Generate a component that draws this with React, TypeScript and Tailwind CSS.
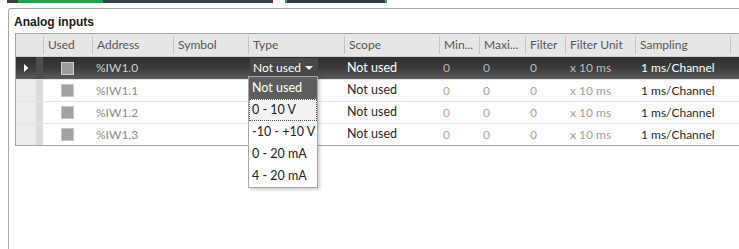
type Col = { key: string; label: string; w: string };

const cols: Col[] = [
  { key: "used", label: "Used", w: "w-[49px]" },
  { key: "address", label: "Address", w: "w-[81px]" },
  { key: "symbol", label: "Symbol", w: "w-[75px]" },
  { key: "type", label: "Type", w: "w-[96px]" },
  { key: "scope", label: "Scope", w: "w-[95px]" },
  { key: "min", label: "Min...", w: "w-[40px]" },
  { key: "max", label: "Maxi...", w: "w-[46px]" },
  { key: "filter", label: "Filter", w: "w-[40px]" },
  { key: "unit", label: "Filter Unit", w: "w-[70px]" },
  { key: "sampling", label: "Sampling", w: "w-[95px]" },
  { key: "extra", label: "", w: "w-[40px]" },
];

const rows = ["%IW1.0", "%IW1.1", "%IW1.2", "%IW1.3"];
const options = ["Not used", "0 - 10 V", "-10 - +10 V", "0 - 20 mA", "4 - 20 mA"];

function Checkbox({ selected }: { selected?: boolean }) {
  return (
    <div
      className={
        "w-[13px] h-[13px] border " +
        (selected ? "bg-[#9c9c9c] border-[#cfcfcf]" : "bg-[#a2a2a2] border-[#c6c6c6]")
      }
    />
  );
}

function TypeDropdown() {
  return (
    <div className="absolute left-0 top-[19px] z-10 w-[70px] bg-white border border-[#a6a6a6] shadow-[2px_2px_3px_rgba(0,0,0,0.18)]">
      {options.map((o, i) => (
        <div
          key={o}
          className={
            "h-[22px] flex items-center text-[12.5px] " +
            (i === 0
              ? "pl-[3px] bg-[#5e5e5e] text-white"
              : i === 1
              ? "pl-[2px] bg-[#f3f3f3] text-[#222] border border-dotted border-[#555]"
              : "pl-[3px] text-[#222]")
          }
        >
          {o}
        </div>
      ))}
    </div>
  );
}

function Row({ addr, index }: { addr: string; index: number }) {
  const sel = index === 0;
  const dim = sel ? "text-[#bdbdbd]" : "text-[#a0a0a0]";
  const strong = sel ? "text-white" : "text-[#2a2a2a]";
  return (
    <div
      className={
        "flex h-[22px] " +
        (index > 0 ? "border-t border-[#e4e4e4] " : "") +
        (sel ? "bg-gradient-to-b from-[#2f2f2f] via-[#3b3b3b] to-[#5c5c5c]" : "bg-white")
      }
    >
      {/* row header */}
      <div className={"w-[20px] flex items-center justify-center " + (sel ? "rounded-l-[4px]" : "bg-[#ececec]")}>
        {sel && (
          <svg width="5" height="8" viewBox="0 0 5 8">
            <path d="M0 0 L4.5 4 L0 8 Z" fill="#ffffff" />
          </svg>
        )}
      </div>
      <div className={"w-[7px] " + (sel ? "bg-[#4e4e4e]" : "bg-[#dcdcdc]")} />

      <div className="w-[49px] flex items-center justify-center">
        <Checkbox selected={sel} />
      </div>
      <div className={"w-[81px] flex items-center pl-[4px] " + (sel ? "text-[#cfcfcf]" : "text-[#8c8c8c]")}>{addr}</div>
      <div className="w-[75px]" />
      <div className="w-[96px] relative flex items-center pl-[2px]">
        {sel && (
          <>
            <div className="w-[68px] h-[20px] flex items-center justify-between pl-[3px] pr-[5px] bg-[#484848] text-white">
              <span>Not used</span>
              <svg width="8" height="4" viewBox="0 0 8 4">
                <path d="M0 0 L8 0 L4 4 Z" fill="#f2f2f2" />
              </svg>
            </div>
            <TypeDropdown />
          </>
        )}
      </div>
      <div className={"w-[95px] flex items-center pl-[3px] text-[12.5px] " + strong}>Not used</div>
      <div className={"w-[40px] flex items-center pl-[4px] " + (sel ? "text-[#c4b49e]" : "text-[#b8a890]")}>0</div>
      <div className={"w-[46px] flex items-center pl-[4px] " + (sel ? "text-[#a9b6c4]" : "text-[#98a8b8]")}>0</div>
      <div className={"w-[40px] flex items-center pl-[5px] " + dim}>0</div>
      <div className={"w-[70px] flex items-center pl-[5px] " + dim}>x 10 ms</div>
      <div className={"w-[95px] flex items-center pl-[6px] " + strong}>1 ms/Channel</div>
      <div className="flex-1" />
    </div>
  );
}

export default function App() {
  return (
    <div className="w-[739px] h-[249px] overflow-hidden bg-white flex flex-col font-['Lato',sans-serif] text-[12px]">
      {/* strip of the panel above, cut by the window */}
      <div className="h-[3px] flex shrink-0">
        <div className="ml-[7px] w-[266px] bg-[#3b4046] flex">
          <div className="ml-[11px] w-[85px] bg-[#1fa34f]" />
        </div>
        <div className="ml-[12px] w-[102px] bg-[#353a40] border-x-[2px] border-[#2bb357]" />
      </div>

      {/* panel */}
      <div className="mt-[5px] ml-[8px] flex-1 border-l border-t border-[#a8a8a8] rounded-tl-[3px] flex flex-col">
        <div className="pt-[6px] pl-[5px] leading-[14px] text-[12px] font-bold text-[#1a1a1a] font-['Liberation_Sans',Arial,sans-serif]">
          Analog inputs
        </div>

        {/* grid */}
        <div className="mt-[4px] ml-[6px] border-l border-t border-b border-[#a4a4a4] w-[760px]">
          <div className="flex h-[23px] bg-[#e6e6e6] border-b border-[#cfcfcf] text-[#565656]">
            <div className="w-[27px]" />
            {cols.map((c) => (
              <div key={c.key} className={c.w + " flex items-center"}>
                <div className="w-px h-[18px] bg-[#c4c4c4]" />
                <span className="pl-[4px] whitespace-nowrap">{c.label}</span>
              </div>
            ))}
          </div>
          {rows.map((r, i) => (
            <Row key={r} addr={r} index={i} />
          ))}
        </div>
      </div>
    </div>
  );
}
